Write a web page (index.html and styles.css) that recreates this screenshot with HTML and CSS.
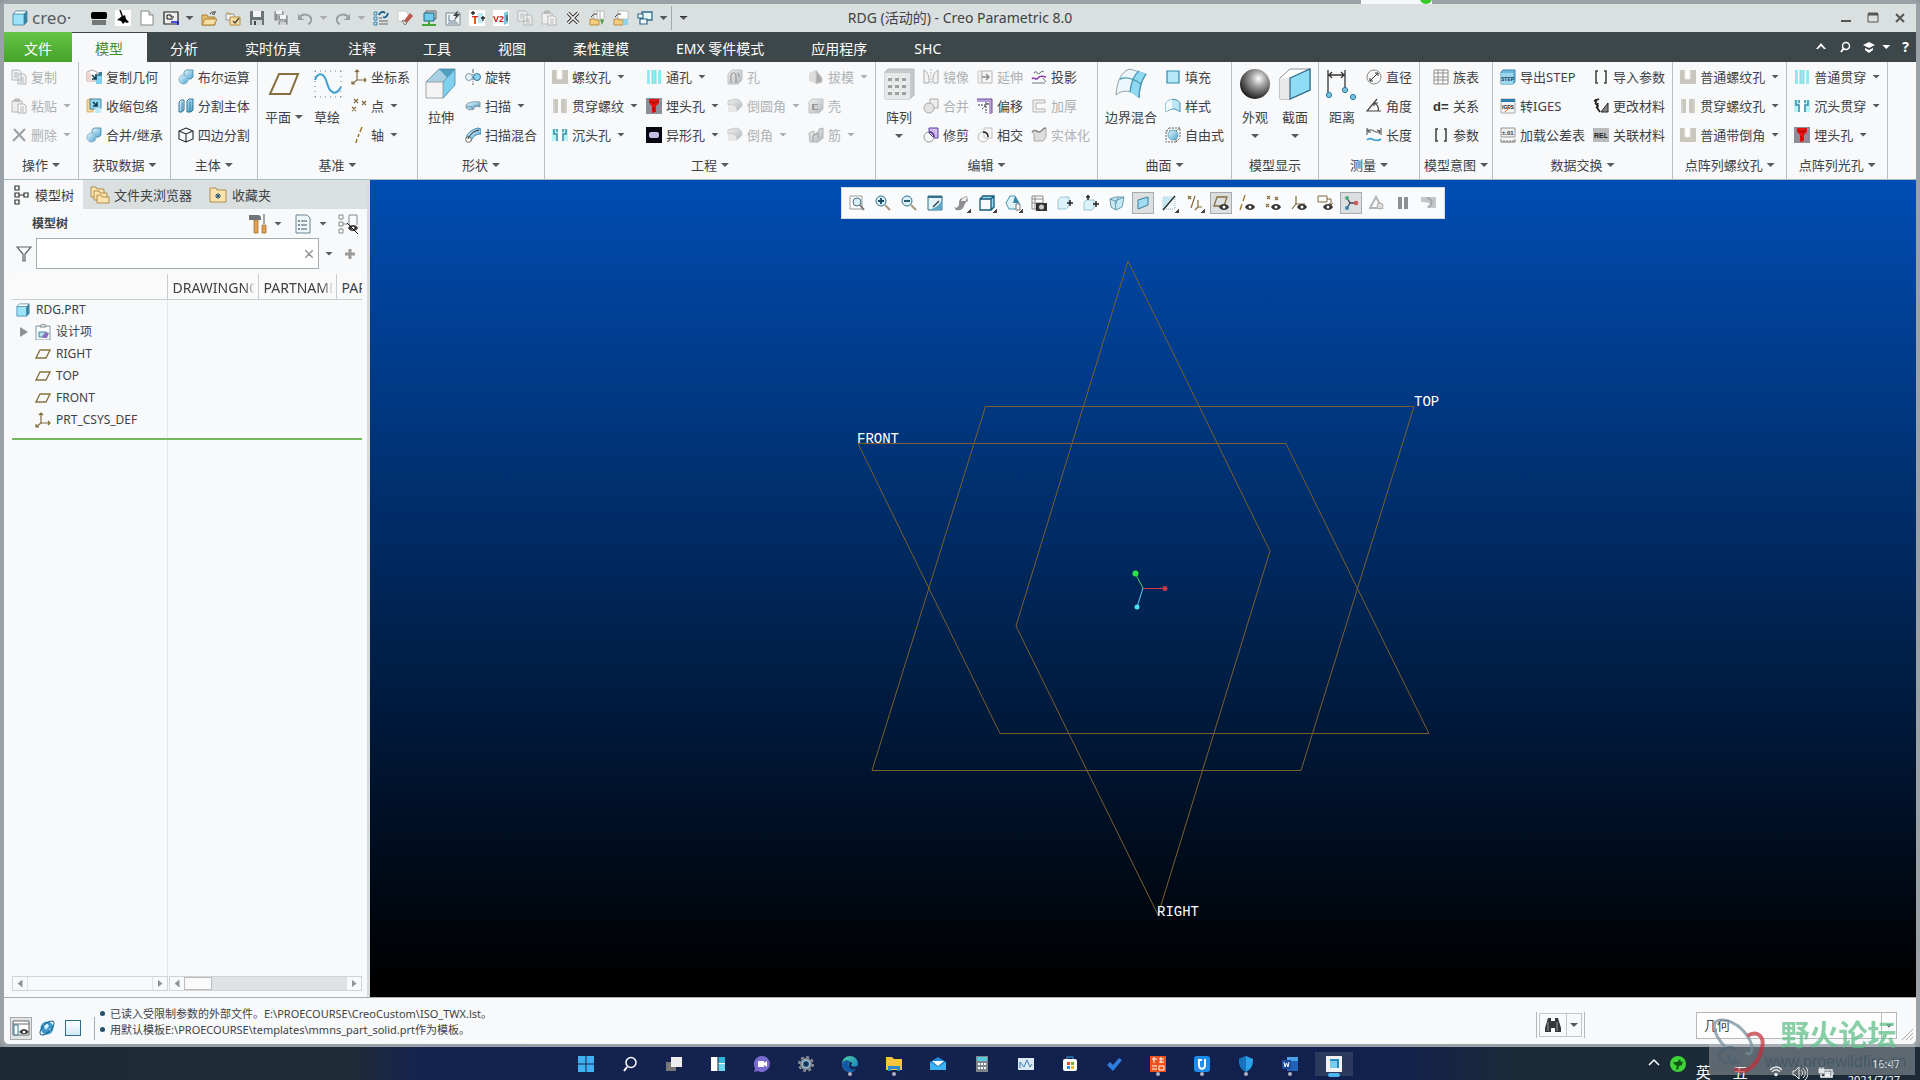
FILE: index.html
```html
<!DOCTYPE html>
<html lang="zh-CN">
<head>
<meta charset="UTF-8">
<meta name="viewport" content="width=device-width, initial-scale=1.0">
<title>RDG (活动的) - Creo Parametric 8.0</title>
<link rel="stylesheet" href="styles.css">
</head>
<body>

<!-- icon sprite -->
<svg class="sprite" aria-hidden="true">
    <defs>
        <linearGradient id="gBlue" x1="0" y1="0" x2="1" y2="1"><stop offset="0" stop-color="#e8f7fd"/><stop offset="1" stop-color="#4fa3cf"/></linearGradient>
        <linearGradient id="gGray" x1="0" y1="0" x2="1" y2="1"><stop offset="0" stop-color="#f2f2f2"/><stop offset="1" stop-color="#b4b8bb"/></linearGradient>
        <radialGradient id="gBall" cx=".62" cy=".32" r=".7"><stop offset="0" stop-color="#fff"/><stop offset=".35" stop-color="#a5a5a5"/><stop offset="1" stop-color="#1c1c1c"/></radialGradient>
        <linearGradient id="gEdge" x1="0" y1="0" x2="1" y2="1"><stop offset="0" stop-color="#4bd5a0"/><stop offset="1" stop-color="#1673cf"/></linearGradient>
    </defs>
    <symbol id="cube" viewBox="0 0 16 16"><path d="M1 4l3-3h11v11l-3 3H1z" fill="#fff"/><path d="M1 4h11v11H1z" fill="#9be3f8"/><path d="M12 4l3-3v11l-3 3z" fill="#3a88a8"/><path d="M1 4l3-3h11v11l-3 3H1zM1 4h11v11M12 4l3-3" fill="none" stroke="#38809c" stroke-width=".8"/></symbol>
    <symbol id="copy" viewBox="0 0 16 16"><path d="M1 1h7l2 2v8H1zM7 5h6l2 2v8H7z" fill="#f1f1f1" stroke="#b3b6b8"/><path d="M3 4h4M3 6h3M3 8h3M9 9h4M9 11h4M9 13h4" stroke="#b3b6b8"/></symbol>
    <symbol id="paste" viewBox="0 0 16 16"><path d="M1 3h10v11H1z" fill="#eee" stroke="#b8bbbd"/><path d="M3 3l1-2h4l1 2z" fill="#ccc" stroke="#aaa"/><path d="M7 6h6l2 2v7H7z" fill="#f8f8f8" stroke="#b0b3b5"/><path d="M9 9h4M9 11h4M9 13h4" stroke="#b3b6b8"/></symbol>
    <symbol id="del" viewBox="0 0 16 16"><path d="M3 2l11 12M14 2L2 14" stroke="#9c9fa1" stroke-width="2" fill="none"/></symbol>
    <symbol id="copygeo" viewBox="0 0 16 16"><path d="M1 3l5-2 5 2v9H1z" fill="#fff" stroke="#9a8a8a" stroke-width=".8"/><path d="M1 3l4 1v10L1 12z" fill="#efd6d0"/><path d="M10 7h6v8h-6z" fill="#7fd0ee"/><path d="M11 7l2-4h3v4z" fill="#3f7f9c"/><path d="M6 6l4 4M10 5v5H6" stroke="#123b54" stroke-width="1.600" fill="none"/></symbol>
    <symbol id="shrink" viewBox="0 0 16 16"><path d="M1 2l3-1h3v13H1z" fill="#f3d79a" stroke="#c79b50" stroke-width=".7"/><path d="M4 1h11v10H4z" fill="#8fd6ef" stroke="#36708c" stroke-width=".8"/><path d="M9 10h6v5H9z" fill="#bfeaf8"/><path d="M7 4l4 4M11 4v4H7" stroke="#123b54" stroke-width="1.600" fill="none"/></symbol>
    <symbol id="merge" viewBox="0 0 16 16"><path d="M6 3l2-2h7v7l-2 2H6z" fill="url(#gBlue)" stroke="#3a86aa" stroke-width=".8"/><circle cx="5.500" cy="10.500" r="4.600" fill="url(#gBlue)" stroke="#6fa9c4" stroke-width=".7"/></symbol>
    <symbol id="split" viewBox="0 0 16 16"><path d="M1 4l2-2h3v10l-2 2H1zM9 3l2-2h4v11l-2 2H9z" fill="url(#gBlue)" stroke="#2d7899"/><path d="M4 4v10M12 3v11" stroke="#2d7899" stroke-width=".8"/></symbol>
    <symbol id="quad" viewBox="0 0 16 16"><path d="M8 1l7 3v8l-7 3-7-3V4zM1 4l7 3 7-3M8 7v8" fill="none" stroke="#26292b" stroke-width="1.100"/></symbol>
    <symbol id="plane" viewBox="0 0 32 32"><path d="M11 6h19l-8 20H2z" fill="none" stroke="#86703f" stroke-width="2"/></symbol>
    <symbol id="sketch" viewBox="0 0 32 32"><path d="M4 12c3-8 9-8 12 3s9 13 14 4" fill="none" stroke="#3c9fd0" stroke-width="2"/><path d="M4 3h26M4 29h26M4 3v26M30 3v26" fill="none" stroke="#777" stroke-dasharray="1 4"/></symbol>
    <symbol id="csys" viewBox="0 0 16 16"><path d="M6 1v10l9 0M6 11l-5 4M4 3l2-2 2 2M13 9l2 2-2 2M1 12v3h3" fill="none" stroke="#806a3a" stroke-width="1.200"/></symbol>
    <symbol id="points" viewBox="0 0 16 16"><path d="M3 1l4 4M7 1L3 5M11 3l4 4M15 3l-4 4M1 9l4 4M5 9l-4 4" stroke="#806a3a" stroke-width="1.200"/></symbol>
    <symbol id="axis" viewBox="0 0 16 16"><path d="M11 0L9 5M8 7l-1 3M6 12l-1 4" stroke="#9a7628" stroke-width="1.500"/></symbol>
    <symbol id="extrude" viewBox="0 0 32 32"><path d="M1 14L14 1h16L18 14z" fill="#a9cfe2"/><path d="M14 1h16v17z" fill="#4d9fc0"/><path d="M30 1v16L18 31V14z" fill="#7fd0ec"/><path d="M1 14h17v16H1z" fill="#f4f4f4" stroke="#8a9297" stroke-width=".8"/><path d="M1 14L14 1h16v16L18 30M18 14L30 1" fill="none" stroke="#4c8aa4" stroke-width=".8"/></symbol>
    <symbol id="revolve" viewBox="0 0 16 16"><path d="M8 0v16" stroke="#333" stroke-dasharray="4 1 1 1" stroke-width=".8"/><circle cx="4" cy="8" r="3.500" fill="#e6f2f8" stroke="#7ba0b3"/><ellipse cx="12" cy="8" rx="3.500" ry="3.500" fill="#8ed3ee" stroke="#2d7899"/></symbol>
    <symbol id="sweep" viewBox="0 0 16 16"><path d="M1 8c0-3 6-5 14-4v5c-5-1-6 0-6 2l-4 1-4-2z" fill="url(#gBlue)" stroke="#6d8e9f" stroke-width=".8"/><path d="M1 8l6 1 1 3M8 9c1-2 4-2 7-1" fill="none" stroke="#6d8e9f" stroke-width=".8"/></symbol>
    <symbol id="blend" viewBox="0 0 16 16"><path d="M1 12C2 5 7 3 13 1l3 1v5C11 7 8 9 6 14z" fill="url(#gBlue)" stroke="#3a86aa"/><circle cx="3.500" cy="12.500" r="2.800" fill="#fff" stroke="#666"/><path d="M3 12C5 7 9 4 14 3" stroke="#222" fill="none"/></symbol>
    <symbol id="thread" viewBox="0 0 16 16"><path d="M0 1h5v9h5V1h6v14H0z" fill="#c9c7bd"/><path d="M5 1v9h5V1" fill="#fff" stroke="#e9e9e4"/></symbol>
    <symbol id="through" viewBox="0 0 16 16"><path d="M1 1h5v14H1zM9 1h6v14H9z" fill="#c9c7bd"/><path d="M2 1v14M14 1v14" stroke="#dddcd5"/></symbol>
    <symbol id="sink" viewBox="0 0 16 16"><path d="M0 2h16v12H0z" fill="#b8f3f6"/><path d="M6 2h4v12H6z" fill="#fff"/><path d="M2 2v5h3v7M14 2v5h-3v7M5 2v3M11 2v3" stroke="#3b8ea5" fill="none" stroke-width="1.500"/></symbol>
    <symbol id="hole" viewBox="0 0 16 16"><path d="M1 1h14v14H1z" fill="#8feaf2"/><path d="M4 1h2v14H4zM10 1h2v14h-2z" fill="#fff"/><path d="M6 1v14M10 1v14" stroke="#8ccdd6"/></symbol>
    <symbol id="csink" viewBox="0 0 16 16"><path d="M0 0h16v16H0z" fill="#8e8e9b"/><path d="M3 1h10v4l-3 3v6l-4 1V8L3 5z" fill="#e5130d"/><path d="M4 3c3 3 6 2 8 0M7 9l1 4" stroke="#8d0806" fill="none"/></symbol>
    <symbol id="odd" viewBox="0 0 16 16"><path d="M0 0h16v16H0z" fill="#060610"/><rect x="3" y="5" width="10" height="6" rx="2" fill="#c4bde6"/></symbol>
    <symbol id="ghole" viewBox="0 0 16 16"><path d="M1 5l4-4h10v10l-4 4H1z" fill="url(#gGray)" stroke="#c1c3c5"/><path d="M4 14V6c1-3 4-3 5 0v8M10 4c2 0 2 2 2 4" fill="none" stroke="#999" stroke-width="1.200"/></symbol>
    <symbol id="ground" viewBox="0 0 16 16"><path d="M1 3l8-2c5 1 6 4 6 7l-5 5c0-5-3-7-9-6z" fill="url(#gGray)" stroke="#c4c6c8"/><path d="M1 8h7l2 6H1z" fill="#e8e8e8"/></symbol>
    <symbol id="gbox" viewBox="0 0 16 16"><path d="M1 4l3-3h11v10l-4 4H1z" fill="url(#gGray)" stroke="#c1c3c5"/><path d="M4 6h6v6H4z" fill="#999"/><path d="M6 7h4v4H6z" fill="#ccc"/></symbol>
    <symbol id="draft" viewBox="0 0 16 16"><path d="M1 4l7-3v14l-7-3z" fill="#ddd"/><path d="M8 1l6 8v4l-6 2z" fill="#aaa" stroke="#ccc"/></symbol>
    <symbol id="rib" viewBox="0 0 16 16"><path d="M1 6l5-2v4l5-4V2l4-1v10l-5 4H2z" fill="url(#gGray)" stroke="#b0b2b4"/><path d="M5 14V9l5-3v5" fill="none" stroke="#999"/></symbol>
    <symbol id="pattern" viewBox="0 0 32 32"><path d="M2 4l3-3h26v26l-4 4H2z" fill="#c6c8c9" stroke="#b5b7b9"/><path d="M2 5h25v26H2z" fill="#e6e7e8"/><path d="M5 10h4v3H5zM12 10h4v3h-4zM19 10h4v3h-4zM5 17h4v3H5zM12 17h4v3h-4zM19 17h4v3h-4zM5 24h4v3H5zM12 24h4v3h-4zM19 24h4v3h-4z" fill="#9c9ea0"/><path d="M5 9h3M12 9h3M19 9h3M5 16h3M12 16h3M19 16h3M5 23h3M12 23h3M19 23h3" stroke="#fff"/></symbol>
    <symbol id="mirror" viewBox="0 0 16 16"><path d="M1 1c5 3 5 7 5 13H1zM15 1c-5 3-5 7-5 13h5z" fill="#f4f4f4" stroke="#a8abad"/><path d="M8 0v16" stroke="#bbb" stroke-dasharray="2 1"/></symbol>
    <symbol id="gmerge" viewBox="0 0 16 16"><path d="M7 1h8v9H7z" fill="#eee" stroke="#aaa"/><circle cx="6" cy="10" r="5" fill="#e4e4e4" stroke="#aaa"/></symbol>
    <symbol id="trim" viewBox="0 0 16 16"><path d="M6 1h9v10h-4L6 6z" fill="#d0bdf0" stroke="#5c3f9c"/><circle cx="6" cy="10" r="5" fill="none" stroke="#999"/><path d="M6 5c3 0 5 2 5 5" fill="none" stroke="#5c2f8c" stroke-width="1.500"/></symbol>
    <symbol id="extend" viewBox="0 0 16 16"><path d="M1 2h4v12H1z" fill="#eee" stroke="#ccc"/><path d="M5 2h10v12H5z" fill="#f5f5f5" stroke="#b5b5b5"/><path d="M5 8h7M9 5l3 3-3 3" fill="none" stroke="#8c8c8c" stroke-width="1.500"/></symbol>
    <symbol id="offset" viewBox="0 0 16 16"><path d="M0 1h15v15h-3V4H0z" fill="#b89ed6"/><path d="M15 1v14M0 1h15" stroke="#6c4c92"/><path d="M1 7h8v8M5 11l6-6M8 5h3v3" fill="none" stroke="#333" stroke-dasharray="2 1"/></symbol>
    <symbol id="intersect" viewBox="0 0 16 16"><path d="M7 1h8v10H7z" fill="#f7f7f7" stroke="#c5c5c5"/><circle cx="6" cy="10" r="5" fill="none" stroke="#bbb"/><path d="M6 5c3 0 5 2 5 5" fill="none" stroke="#222" stroke-width="1.500"/></symbol>
    <symbol id="project" viewBox="0 0 16 16"><path d="M3 4c2-4 4 3 6 0s4-1 4-1" fill="none" stroke="#555"/><path d="M1 10c2-3 4 2 6-1s5-2 8-1" fill="none" stroke="#8a3ea8" stroke-width="1.500"/><path d="M1 14h13M12 9l3 4" stroke="#777"/></symbol>
    <symbol id="thicken" viewBox="0 0 16 16"><path d="M14 2H2v12h12v-3H5V5h9z" fill="#efefef" stroke="#b3b3b3"/></symbol>
    <symbol id="solidify" viewBox="0 0 16 16"><path d="M1 5c3-4 4 0 7 0s3-4 7-4v9l-3 4H3V7z" fill="#ddd" stroke="#aaa"/><path d="M1 5c3-4 4 0 7 0s3-4 7-4" fill="none" stroke="#888" stroke-width="1.500"/></symbol>
    <symbol id="boundary" viewBox="0 0 32 32"><path d="M1 27C2 12 7 3 15 1l16 5C26 13 24 22 24 30 17 22 8 21 1 27z" fill="#eaf8fd" stroke="#96a2a8"/><path d="M15 24c1-9 4-17 9-21l7 3C26 13 24 22 24 30z" fill="#8fd9f1"/><path d="M5 11c7-3 14 0 21 5M15 24c1-9 4-17 9-21M31 6c-5 7-7 16-7 24" fill="none" stroke="#4b98b8" stroke-width="1.400"/></symbol>
    <symbol id="fill" viewBox="0 0 16 16"><path d="M2 2h12v12H2z" fill="#b6e8f8" stroke="#2f89ae" stroke-width="1.200"/></symbol>
    <symbol id="style" viewBox="0 0 16 16"><path d="M1 14V5c3-5 11-5 14 0v9c-4-4-9-4-14 0z" fill="#b9e7f6" stroke="#4294b5"/><path d="M1 14V5c2-3 4-3 6-4v10c-2 0-4 1-6 3z" fill="#effaff"/></symbol>
    <symbol id="freeform" viewBox="0 0 16 16"><path d="M1 4h10v11H1zM4 1h11v10M1 4l3-3M11 4l4-3M11 15l4-4" fill="none" stroke="#666" stroke-dasharray="2 1"/><circle cx="8" cy="8" r="5" fill="url(#gBlue)" stroke="#4294b5" stroke-width=".7"/></symbol>
    <symbol id="ball" viewBox="0 0 32 32"><circle cx="16" cy="16" r="15" fill="url(#gBall)"/></symbol>
    <symbol id="section" viewBox="0 0 32 32"><path d="M1 10L11 1h20v21L11 31H1z" fill="#fff" stroke="#8a9297"/><path d="M1 10h10v21H1z" fill="#e9e9e9"/><path d="M11 10l20-9v21L11 31z" fill="#8edcf5" stroke="#2c6a86" stroke-width="1.200"/></symbol>
    <symbol id="distance" viewBox="0 0 32 32"><path d="M2 2v24M19 2v19M3 7h15M6 4L3 7l3 3M15 4l3 3-3 3" fill="none" stroke="#333" stroke-width="1.300"/><g fill="#76c3e4" stroke="#2d7899"><circle cx="3" cy="27" r="2.600"/><circle cx="19" cy="22" r="2.600"/><circle cx="27" cy="29" r="2.600"/></g></symbol>
    <symbol id="diameter" viewBox="0 0 16 16"><circle cx="8" cy="8" r="7" fill="none" stroke="#888"/><path d="M4 12l8-8M4 9v3h3M9 4h3v3" fill="none" stroke="#333"/></symbol>
    <symbol id="angle" viewBox="0 0 16 16"><path d="M11 1L1 13h14M8 5c4 2 5 5 4 8M8 8V5h4" fill="none" stroke="#444" stroke-width="1.200"/></symbol>
    <symbol id="length" viewBox="0 0 16 16"><path d="M1 1v7M15 1v7M2 4c5-4 7 4 12 0M2 2v3h3M11 3l3 1-1 3" fill="none" stroke="#444"/><path d="M1 13c4-5 8 4 14-1" fill="none" stroke="#3ba1cc" stroke-width="1.700"/></symbol>
    <symbol id="grid" viewBox="0 0 16 16"><path d="M1 1h14v14H1zM1 4h14M1 8h14M1 11h14M5 1v14M10 1v14" fill="#fff" stroke="#8b8b8b"/></symbol>
    <symbol id="paren" viewBox="0 0 16 16"><path d="M5 2H3v12h2M11 2h2v12h-2" fill="none" stroke="#3c3c3c" stroke-width="1.500"/></symbol>
    <symbol id="material" viewBox="0 0 16 16"><path d="M1 3l5-2M2 5l3 3-2 2M5 5c-2 5 0 6 2 9M3 1v4" fill="none" stroke="#1b1b1b" stroke-width="1.700"/><path d="M15 5v9H8z" fill="#888" stroke="#222"/></symbol>

    <!-- quick access toolbar -->
    <symbol id="q-comb" viewBox="0 0 16 16"><rect y="2" width="16" height="7" rx="2"/><path d="M2 10v5M4 10v5M6 10v5M8 10v5M10 10v5M12 10v5M14 10v5" stroke="#111"/></symbol>
    <symbol id="q-broom" viewBox="0 0 16 16"><path d="M0 0h16v16H0z" fill="#fff"/><path d="M5 0l3 8" stroke="#111" stroke-width="1.500"/><path d="M6 7l4-2 1 4 3 3-2 1-2-1-2 2-2-3-4-1z"/></symbol>
    <symbol id="q-new" viewBox="0 0 16 16"><path d="M2 1h8l4 4v10H2z" fill="#fff" stroke="#888"/><path d="M10 1v4h4" fill="#ddd" stroke="#888"/></symbol>
    <symbol id="q-dir" viewBox="0 0 16 16"><path d="M1 2h14v12H1z" fill="#eee" stroke="#222" stroke-width="1.200"/><path d="M4 5v4h6M4 5h4v2h3" fill="none" stroke="#111"/><path d="M8 12h7v3" fill="none" stroke="#1b1bd0" stroke-width="1.500"/></symbol>
    <symbol id="q-open" viewBox="0 0 16 16"><path d="M1 5h5l1 2h7v8H1z" fill="#e6bd6b" stroke="#a98234"/><path d="M1 15l3-6h12l-3 6z" fill="#f8dfa3" stroke="#a98234"/><path d="M9 4c2-3 4-2 5-1V1M14 4h-3" fill="none" stroke="#333"/></symbol>
    <symbol id="q-openchk" viewBox="0 0 16 16"><path d="M1 4h8v6H1z" fill="#f0f0f0" stroke="#999"/><path d="M1 3h4v2" fill="none" stroke="#c79b50"/><path d="M5 7h10v8H5z" fill="#f9dc9b" stroke="#b98f45"/><path d="M8 11l2 2 4-5" fill="none" stroke="#444" stroke-width="1.300"/></symbol>
    <symbol id="q-save" viewBox="0 0 16 16"><path d="M1 1h14v14H1z" fill="#6d7478"/><path d="M4 1h8v6H4z" fill="#f5f5f5"/><path d="M3 10h10v5H3z" fill="#cfd3d5"/><path d="M5 11h2v4H5z" fill="#444"/></symbol>
    <symbol id="q-saveas" viewBox="0 0 16 16"><path d="M1 1h10v10H1zM5 5h10v10H5z" fill="#8a9094" stroke="#eee" stroke-width=".6"/><path d="M7 5h6v4H7zM3 1h6v3H3z" fill="#f5f5f5"/><path d="M7 12h6v3H7z" fill="#d0d0d0"/></symbol>
    <symbol id="q-undo" viewBox="0 0 16 16"><path d="M2 8c3-5 10-4 12 0 1 3-1 6-3 6" fill="none" stroke="#9a9f9f" stroke-width="2"/><path d="M1 4v6h6z" fill="#9a9f9f"/></symbol>
    <symbol id="q-redo" viewBox="0 0 16 16"><path d="M14 8C11 3 4 4 2 8c-1 3 1 6 3 6" fill="none" stroke="#9a9f9f" stroke-width="2"/><path d="M15 4v6H9z" fill="#9a9f9f"/></symbol>
    <symbol id="q-regen" viewBox="0 0 16 16"><path d="M1 2h3v3H1zM1 7h3v3H1zM1 12h3v3H1z" fill="#bfe6f5" stroke="#3a86aa"/><path d="M6 11h9M6 14h9M6 8h3" stroke="#666"/><path d="M6 5c1-3 4-4 6-2M15 3c-1 4-3 5-5 4" fill="none" stroke="#145a86" stroke-width="1.800"/></symbol>
    <symbol id="q-erase" viewBox="0 0 16 16"><path d="M1 1h8l2 3v7H1z" fill="#fff" stroke="#ccc"/><path d="M6 12l7-9 3 3-7 8z" fill="#b8584a"/><path d="M5 11l3 4 2-2-4-3z" fill="#f2e3dd" stroke="#777"/></symbol>
    <symbol id="q-pc" viewBox="0 0 16 16"><path d="M5 1h10v8H5z" fill="#cfd3d5" stroke="#666"/><path d="M3 3h10v8H3z" fill="#6ecbee" stroke="#245e7a"/><path d="M8 11v3M1 15h14" stroke="#44a538" stroke-width="2"/></symbol>
    <symbol id="q-flash" viewBox="0 0 16 16"><path d="M1 3h14v12H1z" fill="#f1f3f4" stroke="#7b8a92"/><path d="M4 5v6h7M3 13h10" fill="none" stroke="#5f7f90"/><path d="M13 0L8 6h3l-2 5 6-7h-3z" fill="#444"/></symbol>
    <symbol id="q-close" viewBox="0 0 16 16"><path d="M3 3l10 10M13 3L3 13" stroke="#333" stroke-width="3.500"/><path d="M3 3l10 10M13 3L3 13" stroke="#fff" stroke-width="1.500"/></symbol>
    <symbol id="q-fold" viewBox="0 0 16 16"><path d="M5 1h10v8H5z" fill="#fff" stroke="#bbb"/><path d="M8 1v7M11 1v7" stroke="#aaa"/><path d="M1 9h4l1 1h4v5H1z" fill="#f4ce7d" stroke="#b98f45"/><path d="M2 7l3-3h3" fill="none" stroke="#444"/><path d="M11 9l4 1-2 5z" fill="#4b9e3d"/></symbol>
    <symbol id="q-fold2" viewBox="0 0 16 16"><path d="M5 1h10v8H5z" fill="#fff" stroke="#bbb"/><path d="M1 9h4l1 1h4v5H1z" fill="#f4ce7d" stroke="#b98f45"/><path d="M2 7l3-3h3" fill="none" stroke="#444"/><path d="M10 9h5v6h-5z" fill="#8fd0ea"/></symbol>
    <symbol id="q-win" viewBox="0 0 16 16"><path d="M5 2h10v8H5z" fill="#e8f6fb" stroke="#2d6d8c" stroke-width="1.300"/><path d="M1 4h5v4H1zM3 9h7v5H3z" fill="#f7f7f7" stroke="#2d6d8c" stroke-width="1.200"/></symbol>

    <!-- side panel -->
    <symbol id="tree" viewBox="0 0 16 20"><path d="M2 1h4v4H2zM2 8h4v4H2zM2 15h4v4H2zM11 8h4v4h-4zM6 10h5" fill="none" stroke="#333" stroke-width="1.200"/></symbol>
    <symbol id="folders" viewBox="0 0 20 18"><g fill="#fbe3ae" stroke="#b08d4c"><path d="M1 1h5l1 2h7v8H1z"/><path d="M4 5h5l1 2h7v7H4z"/><path d="M7 9h4l1 2h7v6H7z"/></g></symbol>
    <symbol id="fav" viewBox="0 0 20 18"><path d="M2 2h6l1 2h9v12H2z" fill="#fbe3ae" stroke="#b08d4c"/><path d="M10 7v6M7 10h6M8 8l4 4M12 8l-4 4" stroke="#17526e"/></symbol>
    <symbol id="tools" viewBox="0 0 18 20"><path d="M5 6h4v13H5z" fill="#e2a251" stroke="#96652a" stroke-width=".7"/><path d="M0 1h10l2 2v3H0z" fill="#6f767b"/><path d="M15 0v10" stroke="#888" stroke-width="1.500"/><path d="M13 11h4v8h-4z" fill="#e2a251" stroke="#96652a" stroke-width=".7"/></symbol>
    <symbol id="list" viewBox="0 0 16 20"><path d="M1 1h11l3 3v15H1z" fill="#eef6fa" stroke="#6d8490"/><path d="M6 7h6M6 11h6M6 15h6" stroke="#456"/><path d="M3 6h2v2H3zM3 10h2v2H3zM3 14h2v2H3z" fill="#7a8f9a"/></symbol>
    <symbol id="treeeye" viewBox="0 0 20 20"><path d="M1 1h4v4H1zM1 8h4v4H1zM1 15h4v4H1zM5 10h4M11 1v10M11 1h8v10" fill="none" stroke="#888"/><path d="M10 14c2-4 8-4 10 0-2 4-8 4-10 0z" fill="#333"/><circle cx="15" cy="14" r="1.500" fill="#fff"/><path d="M9 9l11 11" stroke="#111"/></symbol>
    <symbol id="funnel" viewBox="0 0 16 16"><path d="M1 1h14L9 8v7H7V8z" fill="#fff" stroke="#5d6365" stroke-width="1.200"/></symbol>
    <symbol id="design" viewBox="0 0 16 16"><path d="M1 2h14v14H1z" fill="#fbfbfb" stroke="#7f9aa8"/><path d="M5 3c0-4 6-4 6 0z" fill="#ddd" stroke="#7f8a90"/><path d="M4 8h7v5H4z" fill="#b7e2f2" stroke="#4a7f98"/><path d="M7 12l4-4 3 1-2 5H8z" fill="#8d6cc0"/></symbol>
    <symbol id="splane" viewBox="0 0 16 16"><path d="M5 4h10l-4 8H1z" fill="none" stroke="#86703f" stroke-width="1.300"/></symbol>

    <!-- view toolbar -->
    <symbol id="eye" viewBox="0 0 16 16"><path d="M6 12c2-4 8-4 10 0-2 4-8 4-10 0z" fill="#333"/><circle cx="11" cy="12" r="1.500" fill="#fff"/></symbol>
    <symbol id="v-fit" viewBox="0 0 16 16"><path d="M1 1h12v13H1z" fill="#fff" stroke="#999"/><circle cx="8" cy="7" r="4" fill="#d8f1fa" stroke="#4a6c7c"/><path d="M11 10l4 5" stroke="#777" stroke-width="2"/></symbol>
    <symbol id="v-in" viewBox="0 0 16 16"><circle cx="6" cy="6" r="5" fill="#d8f1fa" stroke="#2f6f8c"/><path d="M6 3v6M3 6h6" stroke="#174a63" stroke-width="1.800"/><path d="M10 10l5 5" stroke="#a8977a" stroke-width="2"/></symbol>
    <symbol id="v-out" viewBox="0 0 16 16"><circle cx="6" cy="6" r="5" fill="#d8f1fa" stroke="#2f6f8c"/><path d="M3 6h6" stroke="#174a63" stroke-width="1.800"/><path d="M10 10l5 5" stroke="#a8977a" stroke-width="2"/></symbol>
    <symbol id="v-repaint" viewBox="0 0 16 16"><path d="M1 1h14v14H1z" fill="#e3f5fb" stroke="#356f88"/><path d="M1 1h14v2H1z" fill="#356f88"/><path d="M15 4c-2 6-6 9-14 11h14z" fill="#5fa9c6"/><path d="M12 6L6 12" stroke="#234" stroke-width="1.300"/></symbol>
    <symbol id="v-render" viewBox="0 0 16 16"><path d="M1 12c2 2 5 0 5-3 0-2 0-5 3-6l5-2 1 5c-2 1-3 2-4 5-1 4-5 5-8 4z" fill="#8c8e90"/><path d="M8 6c1-3 4-4 6-4l-1 4z" fill="#eee"/></symbol>
    <symbol id="v-style" viewBox="0 0 16 16"><path d="M1 4l3-3h11v11l-3 3H1z" fill="#9bd9ee"/><path d="M1 4h11v11H1z" fill="#f6fbfd"/><path d="M1 4l3-3h11v11l-3 3H1zM1 4h11v11M12 4l3-3" fill="none" stroke="#155a78" stroke-width="1.300"/></symbol>
    <symbol id="v-orient" viewBox="0 0 16 16"><path d="M1 8l4-7h5l4 7v6H4z" fill="#dff3fa" stroke="#4294b5"/><path d="M10 1l4 7H8z" fill="#2f86a8"/><path d="M11 9h4v6h-4z" fill="#fff" stroke="#777"/></symbol>
    <symbol id="v-camera" viewBox="0 0 16 16"><path d="M1 1h11v13H1zM1 4h11M1 8h11M4 1v13" fill="#fff" stroke="#888"/><path d="M5 8h11v8H5z" fill="#333"/><circle cx="10.500" cy="12" r="2.500" fill="#ccc"/></symbol>
    <symbol id="v-box" viewBox="0 0 16 16"><path d="M1 5l3-3h8v9l-3 3H1z" fill="#d9f2fb" stroke="#9bc7d8"/><path d="M13 5v6M10 8h6" stroke="#222" stroke-width="1.500"/></symbol>
    <symbol id="v-box2" viewBox="0 0 16 16"><path d="M1 7l2-2h8v8l-2 2H1z" fill="#d9f2fb" stroke="#9bc7d8"/><path d="M5 0v5M3 2h4M13 6v6M10 9h6" stroke="#222" stroke-width="1.500"/></symbol>
    <symbol id="v-persp" viewBox="0 0 16 16"><path d="M1 4l6-2 8 0-2 10-6 3-5-3z" fill="#c8e8f4" stroke="#669cb3"/><path d="M1 4l5 2 9-4M6 6l1 9M9 2l-2 7" fill="none" stroke="#669cb3"/></symbol>
    <symbol id="v-sec" viewBox="0 0 16 16"><path d="M3 5l10-3v8L3 14z" fill="#9fdcf2" stroke="#3a7f9b"/></symbol>
    <symbol id="v-clip" viewBox="0 0 16 16"><path d="M2 2h12v12H2z" fill="#f1f9fc" stroke="#9bb" stroke-dasharray="1 1"/><path d="M2 2h11L2 14z" fill="#c5e8f4"/><path d="M14 1L2 15" stroke="#222" stroke-width="1.200"/></symbol>
    <symbol id="v-datum" viewBox="0 0 16 16"><path d="M1 1l3 3M4 1L1 4M8 1L4 13M11 5v7h4M11 12l-3 3" fill="none" stroke="#806a3a" stroke-width="1.200"/></symbol>
    <symbol id="v-plane" viewBox="0 0 16 16"><path d="M4 2h10l-3 9H1z" fill="none" stroke="#86703f" stroke-width="1.300"/><use href="#eye"/></symbol>
    <symbol id="v-axis" viewBox="0 0 16 16"><path d="M6 0L4 6M3 9l-2 6" stroke="#9a7628" stroke-width="1.300"/><use href="#eye"/></symbol>
    <symbol id="v-point" viewBox="0 0 16 16"><path d="M2 1l3 3M5 1L2 4M10 2l3 3M13 2l-3 3M1 9l3 3M4 9l-3 3" stroke="#806a3a" stroke-width="1.200"/><use href="#eye"/></symbol>
    <symbol id="v-csys" viewBox="0 0 16 16"><path d="M5 1v8h9M5 9l-4 5" fill="none" stroke="#806a3a" stroke-width="1.200"/><use href="#eye"/></symbol>
    <symbol id="v-note" viewBox="0 0 16 16"><path d="M1 1h9v6H1zM10 4h4v6M12 8l2 2 2-2" fill="none" stroke="#806a3a"/><use href="#eye"/></symbol>
    <symbol id="v-spin" viewBox="0 0 16 16"><path d="M4 3l3 5-3 5M7 8h6" fill="none" stroke="#445" stroke-width="1.300"/><circle cx="4" cy="3" r="2" fill="#4caf7a"/><circle cx="4" cy="13" r="2" fill="#3b86b0"/><circle cx="13" cy="8" r="2.300" fill="#d05858"/></symbol>
    <symbol id="v-tri" viewBox="0 0 16 16"><path d="M7 2l6 11H1z" fill="none" stroke="#b2b4b6" stroke-width="2"/><circle cx="11" cy="11" r="3" fill="#ddd" stroke="#aaa"/></symbol>
    <symbol id="v-pause" viewBox="0 0 16 16"><path d="M3 2h4v12H3zM9 2h4v12H9z" fill="#8d8f91"/></symbol>
    <symbol id="v-last" viewBox="0 0 16 16"><path d="M0 2h15v11H3c4 0 6-1 6-3s-3-3-9-3z" fill="#c4c6c8"/><path d="M6 3c6 1 6 7 1 9" fill="none" stroke="#a5a7a9" stroke-width="2"/></symbol>
    <symbol id="binoc" viewBox="0 0 16 16"><path d="M3 1h3v3h4V1h3l3 10v4h-6v-4H6v4H0v-4z" fill="#343638"/><path d="M3 5v9M12 5v9" stroke="#999"/></symbol>
    <symbol id="globe" viewBox="0 0 18 16"><circle cx="9" cy="8" r="6.500" fill="#3c96cc"/><path d="M5 5l4-2 2 3-3 4zM11 9l3-1-2 4z" fill="#d4effa"/><ellipse cx="9" cy="8" rx="9" ry="4" fill="none" stroke="#16618c" transform="rotate(-45 9 8)"/></symbol>
    <symbol id="layout" viewBox="0 0 18 16"><path d="M1 1h16v14H1z" fill="#fff" stroke="#666"/><path d="M1 4h16" stroke="#666"/><path d="M2 5h4v10H2z" fill="#fff" stroke="#2d7899"/><path d="M7 12c3-4 7-4 10 0-3 3-7 3-10 0z" fill="#444"/><circle cx="12" cy="12" r="1.300" fill="#fff"/></symbol>
</svg>

<div class="window">
    <header class="titlebar">
        <div class="brand"><svg class="i16"><use href="#cube"/></svg><span>creo·</span></div>
        <div class="quick">
            <button title="comb"><svg class="i16"><use href="#q-comb"/></svg></button>
            <button title="clean"><svg class="i16"><use href="#q-broom"/></svg></button>
            <button title="new"><svg class="i16"><use href="#q-new"/></svg></button>
            <button class="with-caret" title="directory"><svg class="i16"><use href="#q-dir"/></svg><i class="caret"></i></button>
            <button title="open"><svg class="i16"><use href="#q-open"/></svg></button>
            <button title="open last"><svg class="i16"><use href="#q-openchk"/></svg></button>
            <button title="save"><svg class="i16"><use href="#q-save"/></svg></button>
            <button title="save as"><svg class="i16"><use href="#q-saveas"/></svg></button>
            <button class="with-caret" title="undo" disabled><svg class="i16"><use href="#q-undo"/></svg><i class="caret"></i></button>
            <button class="with-caret" title="redo" disabled><svg class="i16"><use href="#q-redo"/></svg><i class="caret"></i></button>
            <button title="regenerate"><svg class="i16"><use href="#q-regen"/></svg></button>
            <button title="erase"><svg class="i16"><use href="#q-erase"/></svg></button>
            <button title="session"><svg class="i16"><use href="#q-pc"/></svg></button>
            <button title="mapkey"><svg class="i16"><use href="#q-flash"/></svg></button>
            <button title="T"><svg class="i16 lettered" viewBox="0 0 16 16"><path d="M0 0h16v16H0z" fill="#fff"/><path d="M9 3h5v10H9z" fill="#bde7f5"/><text x="3" y="14" font-size="10" fill="#c8211b">T</text><path d="M4 1v4M2 3h4M14 6v5M12 8h4" stroke="#222" stroke-width="1.300"/></svg></button>
            <button title="V2"><svg class="i16 lettered" viewBox="0 0 16 16"><path d="M0 0h16v16H0z" fill="#fff"/><path d="M11 3l4-2v12l-4 2z" fill="#7fc6df"/><text x="0" y="12" font-size="9" fill="#c8211b">V2</text><path d="M14 5v6" stroke="#222"/></svg></button>
            <button title="copy" disabled><svg class="i16"><use href="#copy"/></svg></button>
            <button title="paste" disabled><svg class="i16"><use href="#paste"/></svg></button>
            <button title="close"><svg class="i16"><use href="#q-close"/></svg></button>
            <button title="folder in"><svg class="i16"><use href="#q-fold"/></svg></button>
            <button title="folder out"><svg class="i16"><use href="#q-fold2"/></svg></button>
            <button class="with-caret" title="windows"><svg class="i16"><use href="#q-win"/></svg><i class="caret"></i></button>
            <button class="customize" title="customize"><i class="caret"></i></button>
        </div>
        <h1>RDG (活动的) - Creo Parametric 8.0</h1>
        <div class="winbtns">
            <button title="minimize"><svg class="i12" viewBox="0 0 12 12"><path d="M1 9h10" stroke="#555" stroke-width="2"/></svg></button>
            <button title="maximize"><svg class="i12" viewBox="0 0 12 12"><path d="M1 2h10v8H1z" fill="none" stroke="#555"/><path d="M1 2h10" stroke="#555" stroke-width="3"/></svg></button>
            <button title="close window"><svg class="i12" viewBox="0 0 12 12"><path d="M2 2l8 8M10 2l-8 8" stroke="#555" stroke-width="2"/></svg></button>
        </div>
    </header>

    <nav class="tabs">
        <button class="tab file">文件</button>
        <button class="tab active">模型</button>
        <button class="tab">分析</button>
        <button class="tab">实时仿真</button>
        <button class="tab">注释</button>
        <button class="tab">工具</button>
        <button class="tab">视图</button>
        <button class="tab">柔性建模</button>
        <button class="tab">EMX 零件模式</button>
        <button class="tab">应用程序</button>
        <button class="tab">SHC</button>
        <div class="tabtools">
            <button title="collapse"><svg class="i12" viewBox="0 0 12 12"><path d="M1 8l5-6 5 6-2 0-3-3-3 3z" fill="#fff"/></svg></button>
            <button title="search"><svg class="i12" viewBox="0 0 12 12"><circle cx="7" cy="5" r="3.500" fill="none" stroke="#fff" stroke-width="1.500"/><path d="M5 7l-3 4" stroke="#fff" stroke-width="2"/></svg></button>
            <button title="learn"><svg class="i12" viewBox="0 0 12 12"><path d="M0 4l6-3 6 3-6 3zM2 7l4 2 4-2v2l-4 3-4-3z" fill="#fff"/></svg><i class="caret"></i></button>
            <button class="help" title="help">?</button>
        </div>
    </nav>

    <section class="ribbon">
        <div class="group">
            <div class="tools">
                <div class="col">
                    <button class="cmd" disabled><svg class="i16"><use href="#copy"/></svg>复制</button>
                    <button class="cmd" disabled><svg class="i16"><use href="#paste"/></svg>粘贴<i class="caret"></i></button>
                    <button class="cmd" disabled><svg class="i16"><use href="#del"/></svg>删除<i class="caret"></i></button>
                </div>
            </div>
            <button class="label">操作<i class="caret"></i></button>
        </div>
        <div class="group">
            <div class="tools">
                <div class="col">
                    <button class="cmd"><svg class="i16"><use href="#copygeo"/></svg>复制几何</button>
                    <button class="cmd"><svg class="i16"><use href="#shrink"/></svg>收缩包络</button>
                    <button class="cmd"><svg class="i16"><use href="#merge"/></svg>合并/继承</button>
                </div>
            </div>
            <button class="label">获取数据<i class="caret"></i></button>
        </div>
        <div class="group">
            <div class="tools">
                <div class="col">
                    <button class="cmd"><svg class="i16"><use href="#merge"/></svg>布尔运算</button>
                    <button class="cmd"><svg class="i16"><use href="#split"/></svg>分割主体</button>
                    <button class="cmd"><svg class="i16"><use href="#quad"/></svg>四边分割</button>
                </div>
            </div>
            <button class="label">主体<i class="caret"></i></button>
        </div>
        <div class="group">
            <div class="tools">
                <button class="big"><svg class="i32"><use href="#plane"/></svg><span>平面<i class="caret"></i></span></button>
                <button class="big"><svg class="i32"><use href="#sketch"/></svg><span>草绘</span></button>
                <div class="col">
                    <button class="cmd"><svg class="i16"><use href="#csys"/></svg>坐标系</button>
                    <button class="cmd"><svg class="i16"><use href="#points"/></svg>点<i class="caret"></i></button>
                    <button class="cmd"><svg class="i16"><use href="#axis"/></svg>轴<i class="caret"></i></button>
                </div>
            </div>
            <button class="label">基准<i class="caret"></i></button>
        </div>
        <div class="group">
            <div class="tools">
                <button class="big"><svg class="i32"><use href="#extrude"/></svg><span>拉伸</span></button>
                <div class="col">
                    <button class="cmd"><svg class="i16"><use href="#revolve"/></svg>旋转</button>
                    <button class="cmd"><svg class="i16"><use href="#sweep"/></svg>扫描<i class="caret"></i></button>
                    <button class="cmd"><svg class="i16"><use href="#blend"/></svg>扫描混合</button>
                </div>
            </div>
            <button class="label">形状<i class="caret"></i></button>
        </div>
        <div class="group">
            <div class="tools">
                <div class="col">
                    <button class="cmd"><svg class="i16"><use href="#thread"/></svg>螺纹孔<i class="caret"></i></button>
                    <button class="cmd"><svg class="i16"><use href="#through"/></svg>贯穿螺纹<i class="caret"></i></button>
                    <button class="cmd"><svg class="i16"><use href="#sink"/></svg>沉头孔<i class="caret"></i></button>
                </div>
                <div class="col">
                    <button class="cmd"><svg class="i16"><use href="#hole"/></svg>通孔<i class="caret"></i></button>
                    <button class="cmd"><svg class="i16"><use href="#csink"/></svg>埋头孔<i class="caret"></i></button>
                    <button class="cmd"><svg class="i16"><use href="#odd"/></svg>异形孔<i class="caret"></i></button>
                </div>
                <div class="col">
                    <button class="cmd" disabled><svg class="i16"><use href="#ghole"/></svg>孔</button>
                    <button class="cmd" disabled><svg class="i16"><use href="#ground"/></svg>倒圆角<i class="caret"></i></button>
                    <button class="cmd" disabled><svg class="i16"><use href="#ground"/></svg>倒角<i class="caret"></i></button>
                </div>
                <div class="col">
                    <button class="cmd" disabled><svg class="i16"><use href="#draft"/></svg>拔模<i class="caret"></i></button>
                    <button class="cmd" disabled><svg class="i16"><use href="#gbox"/></svg>壳</button>
                    <button class="cmd" disabled><svg class="i16"><use href="#rib"/></svg>筋<i class="caret"></i></button>
                </div>
            </div>
            <button class="label">工程<i class="caret"></i></button>
        </div>
        <div class="group">
            <div class="tools">
                <button class="big"><svg class="i32"><use href="#pattern"/></svg><span>阵列</span><i class="caret"></i></button>
                <div class="col">
                    <button class="cmd" disabled><svg class="i16"><use href="#mirror"/></svg>镜像</button>
                    <button class="cmd" disabled><svg class="i16"><use href="#gmerge"/></svg>合并</button>
                    <button class="cmd"><svg class="i16"><use href="#trim"/></svg>修剪</button>
                </div>
                <div class="col">
                    <button class="cmd" disabled><svg class="i16"><use href="#extend"/></svg>延伸</button>
                    <button class="cmd"><svg class="i16"><use href="#offset"/></svg>偏移</button>
                    <button class="cmd"><svg class="i16"><use href="#intersect"/></svg>相交</button>
                </div>
                <div class="col">
                    <button class="cmd"><svg class="i16"><use href="#project"/></svg>投影</button>
                    <button class="cmd" disabled><svg class="i16"><use href="#thicken"/></svg>加厚</button>
                    <button class="cmd" disabled><svg class="i16"><use href="#solidify"/></svg>实体化</button>
                </div>
            </div>
            <button class="label">编辑<i class="caret"></i></button>
        </div>
        <div class="group">
            <div class="tools">
                <button class="big"><svg class="i32"><use href="#boundary"/></svg><span>边界混合</span></button>
                <div class="col">
                    <button class="cmd"><svg class="i16"><use href="#fill"/></svg>填充</button>
                    <button class="cmd"><svg class="i16"><use href="#style"/></svg>样式</button>
                    <button class="cmd"><svg class="i16"><use href="#freeform"/></svg>自由式</button>
                </div>
            </div>
            <button class="label">曲面<i class="caret"></i></button>
        </div>
        <div class="group">
            <div class="tools">
                <button class="big"><svg class="i32"><use href="#ball"/></svg><span>外观</span><i class="caret"></i></button>
                <button class="big"><svg class="i32"><use href="#section"/></svg><span>截面</span><i class="caret"></i></button>
            </div>
            <div class="label">模型显示</div>
        </div>
        <div class="group">
            <div class="tools">
                <button class="big"><svg class="i32"><use href="#distance"/></svg><span>距离</span></button>
                <div class="col">
                    <button class="cmd"><svg class="i16"><use href="#diameter"/></svg>直径</button>
                    <button class="cmd"><svg class="i16"><use href="#angle"/></svg>角度</button>
                    <button class="cmd"><svg class="i16"><use href="#length"/></svg>长度</button>
                </div>
            </div>
            <button class="label">测量<i class="caret"></i></button>
        </div>
        <div class="group">
            <div class="tools">
                <div class="col">
                    <button class="cmd"><svg class="i16"><use href="#grid"/></svg>族表</button>
                    <button class="cmd"><svg class="i16 lettered" viewBox="0 0 16 16"><text x="0" y="13" font-size="13" fill="#333">d=</text></svg>关系</button>
                    <button class="cmd"><svg class="i16"><use href="#paren"/></svg>参数</button>
                </div>
            </div>
            <button class="label">模型意图<i class="caret"></i></button>
        </div>
        <div class="group">
            <div class="tools">
                <div class="col">
                    <button class="cmd"><svg class="i16 lettered" viewBox="0 0 16 16"><path d="M1 3l2-2h12v12l-2 2H1z" fill="#69b9dd" stroke="#3a86aa"/><path d="M1 4h12v11H1z" fill="#9bd6ee"/><text x="1" y="12" font-size="5" fill="#143c58">STEP</text></svg>导出STEP</button>
                    <button class="cmd"><svg class="i16 lettered" viewBox="0 0 16 16"><path d="M1 1h14v14H1z" fill="#f3f3f3" stroke="#aaa"/><path d="M1 1h14v3H1z" fill="#2c7cb0"/><text x="2" y="11" font-size="5" fill="#222">IGES</text><path d="M5 14l7-7" stroke="#e0692b"/></svg>转IGES</button>
                    <button class="cmd"><svg class="i16 lettered" viewBox="0 0 16 16"><path d="M1 1h14v9H1z" fill="#eee" stroke="#999"/><text x="2" y="8" font-size="6" fill="#333">±.01</text><path d="M1 12v3h14v-3M4 15v-2M7 15v-2M10 15v-2M13 15v-2" fill="none" stroke="#777"/></svg>加载公差表</button>
                </div>
                <div class="col">
                    <button class="cmd"><svg class="i16"><use href="#paren"/></svg>导入参数</button>
                    <button class="cmd"><svg class="i16"><use href="#material"/></svg>更改材料</button>
                    <button class="cmd"><svg class="i16 lettered" viewBox="0 0 16 16"><path d="M0 1h16v14H0z" fill="#b9babb"/><text x="1" y="11" font-size="7" fill="#222">REL</text></svg>关联材料</button>
                </div>
            </div>
            <button class="label">数据交换<i class="caret"></i></button>
        </div>
        <div class="group">
            <div class="tools">
                <div class="col">
                    <button class="cmd"><svg class="i16"><use href="#thread"/></svg>普通螺纹孔<i class="caret"></i></button>
                    <button class="cmd"><svg class="i16"><use href="#through"/></svg>贯穿螺纹孔<i class="caret"></i></button>
                    <button class="cmd"><svg class="i16"><use href="#thread"/></svg>普通带倒角<i class="caret"></i></button>
                </div>
            </div>
            <button class="label">点阵列螺纹孔<i class="caret"></i></button>
        </div>
        <div class="group">
            <div class="tools">
                <div class="col">
                    <button class="cmd"><svg class="i16"><use href="#hole"/></svg>普通贯穿<i class="caret"></i></button>
                    <button class="cmd"><svg class="i16"><use href="#sink"/></svg>沉头贯穿<i class="caret"></i></button>
                    <button class="cmd"><svg class="i16"><use href="#csink"/></svg>埋头孔<i class="caret"></i></button>
                </div>
            </div>
            <button class="label">点阵列光孔<i class="caret"></i></button>
        </div>
    </section>

    <main class="work">
        <aside class="side">
            <div class="side-tabs">
                <button class="active"><svg class="i20"><use href="#tree"/></svg>模型树</button>
                <button><svg class="i20"><use href="#folders"/></svg>文件夹浏览器</button>
                <button><svg class="i20"><use href="#fav"/></svg>收藏夹</button>
            </div>
            <div class="side-head">
                <h2>模型树</h2>
                <button title="settings"><svg class="i20"><use href="#tools"/></svg><i class="caret"></i></button>
                <button title="show"><svg class="i20"><use href="#list"/></svg><i class="caret"></i></button>
                <button title="visibility"><svg class="i20"><use href="#treeeye"/></svg></button>
            </div>
            <div class="filter">
                <svg class="i16"><use href="#funnel"/></svg>
                <div class="search">
                    <input type="text" aria-label="过滤">
                    <button title="clear"><svg class="i8" viewBox="0 0 8 8"><path d="M0 0l8 8M8 0L0 8" stroke="#999" stroke-width="1.500"/></svg></button>
                </div>
                <button title="options"><i class="caret"></i></button>
                <button title="add"><svg class="i12" viewBox="0 0 12 12"><path d="M6 1v10M1 6h10" stroke="#999" stroke-width="3"/></svg></button>
            </div>
            <div class="tree">
                <table>
                    <thead>
                        <tr><th class="c-name"></th><th class="c-no"><span>DRAWINGNO</span></th><th class="c-part"><span>PARTNAME</span></th><th><span>PAR</span></th></tr>
                    </thead>
                    <tbody>
                        <tr><td><div class="node root"><svg class="i14"><use href="#cube"/></svg>RDG.PRT</div></td><td colspan="3"></td></tr>
                        <tr><td><div class="node"><i class="twisty"></i><svg class="i16"><use href="#design"/></svg>设计项</div></td><td colspan="3"></td></tr>
                        <tr><td><div class="node leaf"><svg class="i16"><use href="#splane"/></svg>RIGHT</div></td><td colspan="3"></td></tr>
                        <tr><td><div class="node leaf"><svg class="i16"><use href="#splane"/></svg>TOP</div></td><td colspan="3"></td></tr>
                        <tr><td><div class="node leaf"><svg class="i16"><use href="#splane"/></svg>FRONT</div></td><td colspan="3"></td></tr>
                        <tr><td><div class="node leaf"><svg class="i16"><use href="#csys"/></svg>PRT_CSYS_DEF</div></td><td colspan="3"></td></tr>
                        <tr class="insert"><td></td><td colspan="3"></td></tr>
                        <tr class="rest"><td></td><td colspan="3"></td></tr>
                    </tbody>
                </table>
            </div>
            <div class="scrolls">
                <div class="scroll off"><button title="left"><i class="left"></i></button><div class="track"></div><button title="right"><i class="right"></i></button></div>
                <div class="scroll"><button title="left"><i class="left"></i></button><div class="track"><div class="thumb"></div></div><button title="right"><i class="right"></i></button></div>
            </div>
        </aside>

        <section class="canvas">
            <svg class="model" viewBox="0 0 1546 817">
                <g class="datum">
                    <path d="M758 81L900 371L788 735L646 446Z"/>
                    <path d="M615.500 226.500H1044L931 590.500H502Z"/>
                    <path d="M488 263.500H916L1059 553.500H630Z"/>
                </g>
                <path d="M773 408.500H795" stroke="#c8374e"/>
                <path d="M773 408L765 393" stroke="#4fd06a"/>
                <path d="M773 408L767 427" stroke="#55d5ee"/>
                <circle cx="795" cy="408.500" r="2.500" fill="#c8374e"/>
                <circle cx="765.500" cy="393.500" r="3" fill="#2be44c"/>
                <circle cx="767" cy="427" r="2.500" fill="#4fe0f5"/>
                <text x="487" y="263">FRONT</text>
                <text x="1044" y="226">TOP</text>
                <text x="787" y="736">RIGHT</text>
            </svg>
            <div class="viewbar">
                <button title="refit"><svg class="i16"><use href="#v-fit"/></svg></button>
                <button title="zoom in"><svg class="i16"><use href="#v-in"/></svg></button>
                <button title="zoom out"><svg class="i16"><use href="#v-out"/></svg></button>
                <button title="repaint"><svg class="i16"><use href="#v-repaint"/></svg></button>
                <button class="more" title="render"><svg class="i16"><use href="#v-render"/></svg></button>
                <button class="more" title="display style"><svg class="i16"><use href="#v-style"/></svg></button>
                <button class="more" title="orientation"><svg class="i16"><use href="#v-orient"/></svg></button>
                <button title="view manager"><svg class="i16"><use href="#v-camera"/></svg></button>
                <button title="previous"><svg class="i16"><use href="#v-box"/></svg></button>
                <button title="next"><svg class="i16"><use href="#v-box2"/></svg></button>
                <button title="perspective"><svg class="i16"><use href="#v-persp"/></svg></button>
                <button class="on" title="section"><svg class="i16"><use href="#v-sec"/></svg></button>
                <button class="more" title="clip"><svg class="i16"><use href="#v-clip"/></svg></button>
                <button class="more" title="datum filters"><svg class="i16"><use href="#v-datum"/></svg></button>
                <button class="on" title="planes"><svg class="i16"><use href="#v-plane"/></svg></button>
                <button title="axes"><svg class="i16"><use href="#v-axis"/></svg></button>
                <button title="points"><svg class="i16"><use href="#v-point"/></svg></button>
                <button title="csys"><svg class="i16"><use href="#v-csys"/></svg></button>
                <button title="annotations"><svg class="i16"><use href="#v-note"/></svg></button>
                <button class="on" title="spin center"><svg class="i16"><use href="#v-spin"/></svg></button>
                <button title="simulate" disabled><svg class="i16"><use href="#v-tri"/></svg></button>
                <button title="pause" disabled><svg class="i16"><use href="#v-pause"/></svg></button>
                <button title="results" disabled><svg class="i16"><use href="#v-last"/></svg></button>
            </div>
        </section>
    </main>

    <footer class="status">
        <div class="status-btns">
            <button class="on" title="navigator"><svg class="i18"><use href="#layout"/></svg></button>
            <button title="browser"><svg class="i18"><use href="#globe"/></svg></button>
            <button title="full screen"><i class="square"></i></button>
        </div>
        <ul class="messages">
            <li>已读入受限制参数的外部文件。E:\PROECOURSE\CreoCustom\ISO_TWX.lst。</li>
            <li>用默认模板E:\PROECOURSE\templates\mmns_part_solid.prt作为模板。</li>
        </ul>
        <div class="find">
            <button title="find"><svg class="i16"><use href="#binoc"/></svg></button>
            <button title="find options"><i class="caret"></i></button>
        </div>
        <div class="picker">
            <select aria-label="选择过滤器"><option>几何</option></select>
            <i class="caret"></i>
        </div>
        <svg class="grip" viewBox="0 0 12 12"><path d="M1 12L12 1M5 12l7-7M9 12l3-3" stroke="#aaa"/></svg>
    </footer>
</div>

<div class="taskbar">
    <div class="apps">
        <button title="start"><svg class="i16" viewBox="0 0 16 16"><path d="M0 0h7.500v7.500H0zM8.500 0H16v7.500H8.500zM0 8.500h7.500V16H0zM8.500 8.500H16V16H8.500z" fill="#3fb1f2"/></svg></button>
        <button title="search"><svg class="i16" viewBox="0 0 16 16"><circle cx="9" cy="6.500" r="5" fill="none" stroke="#fff" stroke-width="1.500"/><path d="M5 11l-3 4" stroke="#fff" stroke-width="2"/></svg></button>
        <button title="task view"><svg class="i16" viewBox="0 0 16 16"><path d="M0 6h10v9H0z" fill="#777"/><path d="M5 1h11v10H5z" fill="#eee"/></svg></button>
        <button title="widgets"><svg class="i16" viewBox="0 0 16 16"><path d="M1 1h14v14H1z" fill="#fff"/><path d="M8 1h7v6H8z" fill="#31b3dc"/><path d="M8 8h7v7H8z" fill="#6dd5ec"/><path d="M8 1v14" stroke="#123" /></svg></button>
        <button title="chat"><svg class="i16" viewBox="0 0 16 16"><path d="M8 0a8 8 0 1 1-4 15l-4 1 1-4A8 8 0 0 1 8 0z" fill="#7a6ad0"/><path d="M4 5h6v6H4zM10 7l3-2v6l-3-2z" fill="#fff"/></svg></button>
        <button title="settings"><svg class="i16" viewBox="0 0 16 16"><circle cx="8" cy="8" r="6" fill="#8a9096"/><circle cx="8" cy="8" r="7" fill="none" stroke="#8a9096" stroke-width="2" stroke-dasharray="3 2.500"/><circle cx="8" cy="8" r="3.500" fill="#16375a" stroke="#9fe0ff"/></svg></button>
        <button class="run" title="edge"><svg class="i16" viewBox="0 0 16 16"><circle cx="8" cy="8" r="8" fill="url(#gEdge)"/><path d="M0 8c1-4 6-5 8-2-3 2-2 7 6 7-4 5-13 3-14-5z" fill="#1256a6"/><path d="M8 6c3 0 2 2 1 3 1 2 5 2 7 0l-1 4c-6 2-10-2-7-7z" fill="#14234f"/></svg></button>
        <button class="run" title="explorer"><svg class="i16" viewBox="0 0 16 16"><path d="M0 1h6l2 2h8v11H0z" fill="#f9c440"/><path d="M2 10h12v5h-3v-2H5v2H2z" fill="#2c8bd0"/></svg></button>
        <button title="mail"><svg class="i16" viewBox="0 0 16 16"><path d="M0 6l8-5 8 5v8H0z" fill="#1d86d8"/><path d="M2 5h12L8 10z" fill="#fff"/><path d="M0 6l8 5 8-5v8H0z" fill="#3cb2f0"/></svg></button>
        <button title="calculator"><svg class="i16" viewBox="0 0 16 16"><path d="M2 0h12v16H2z" fill="#7d858c"/><path d="M3 1h10v4H3z" fill="#5ccbe0"/><path d="M4 7h2v2H4zM7 7h2v2H7zM10 7h2v2h-2zM4 11h2v2H4zM7 11h2v2H7zM10 11h2v2h-2z" fill="#fff"/></svg></button>
        <button title="monitor"><svg class="i16" viewBox="0 0 16 16"><path d="M0 2h16v12H0z" fill="#dce8f2"/><path d="M2 12V6l4 5 3-7 3 7 2-3" fill="none" stroke="#3981b8"/></svg></button>
        <button title="store"><svg class="i16" viewBox="0 0 16 16"><path d="M5 3V1h6v2" fill="none" stroke="#3ca6e8"/><rect y="3" x="1" width="14" height="12" rx="2" fill="#fff"/><path d="M5 6h3v3H5z" fill="#e74c2c"/><path d="M9 6h3v3H9z" fill="#6fb52c"/><path d="M5 10h3v3H5z" fill="#2d8be0"/><path d="M9 10h3v3H9z" fill="#f5b81f"/></svg></button>
        <button title="todo"><svg class="i16" viewBox="0 0 16 16"><path d="M1 9l3-3 3 3 6-7 3 2-9 11z" fill="#2f7fe0"/></svg></button>
        <button class="run" title="app"><svg class="i16" viewBox="0 0 16 16"><path d="M0 0h16v16H0z" fill="#e8531f"/><path d="M2 3h5M4 1v6M9 3h5M9 6h5M11 1v6M2 10h5M2 13h5M9 10h5v4H9z" stroke="#fff" fill="none"/></svg></button>
        <button class="run" title="u"><svg class="i16" viewBox="0 0 16 16"><rect width="16" height="16" rx="3" fill="#1b8ceb"/><path d="M5 3v6c0 5 6 5 6 0V3M5 4h3" fill="none" stroke="#fff" stroke-width="2"/></svg></button>
        <button class="run" title="security"><svg class="i16" viewBox="0 0 16 16"><path d="M8 0l7 3c0 7-2 10-7 13C3 13 1 10 1 3z" fill="#2ba3e8"/><path d="M8 0v16C3 13 1 10 1 3z" fill="#1673bd"/></svg></button>
        <button class="run" title="word"><svg class="i16" viewBox="0 0 16 16"><path d="M5 1h11v14H5z" fill="#4aa1e8"/><path d="M5 5h11v10H5z" fill="#2460b4"/><path d="M0 4h9v9H0z" fill="#174a9c"/><path d="M2 6l1 5 1.500-4L6 11l1-5" fill="none" stroke="#fff"/></svg></button>
        <button class="run current" title="creo"><svg class="i16" viewBox="0 0 16 16"><path d="M0 0h16v16H0z" fill="#f2f2f2"/><path d="M4 3h9v9H4z" fill="#1f8dc2"/><path d="M4 5h7v7H4z" fill="#7acbec"/></svg></button>
    </div>
    <div class="tray">
        <svg class="i12" viewBox="0 0 12 12"><path d="M1 9l5-5 5 5" fill="none" stroke="#fff" stroke-width="1.500"/></svg>
        <svg class="i16" viewBox="0 0 16 16"><circle cx="8" cy="8" r="8" fill="#3fd33a"/><path d="M3 6l4 0 3-3 1 3 2-1-1 4-3 1-1 4-2-1 1-3-2-1z" fill="#115a15"/></svg>
        <span class="ime">英</span>
        <span class="ime">五</span>
        <svg class="i12" viewBox="0 0 12 12"><path d="M0 5c3-4 9-4 12 0M2 7c2-3 6-3 8 0" fill="none" stroke="#fff" stroke-width="1.300"/><circle cx="6" cy="9.500" r="1.800" fill="#fff"/></svg>
        <svg class="i16" viewBox="0 0 16 16"><path d="M1 6h2l4-4v12l-4-4H1zM9 5c2 2 2 4 0 6M11 3c3 3 3 7 0 10M13 1c4 4 4 10 0 14" fill="none" stroke="#fff"/></svg>
        <svg class="i16" viewBox="0 0 16 16"><path d="M5 5h9v7H3V9" fill="none" stroke="#fff" stroke-width="1.500"/><path d="M7 7h5v4H7zM1 4h5v4H1zM2 2v2M5 2v2M15 7v3" fill="#fff" stroke="#fff"/></svg>
        <div class="clock"><time>16:47</time><time>2021/7/27</time></div>
    </div>
</div>

<!-- small floating widget docked at the top edge -->
<div class="float"><i></i></div>

<!-- forum stamp over the lower right corner -->
<div class="stamp">
    <svg viewBox="0 0 60 58"><path d="M16 30C2 14 2 2 14 3c14 1 28 16 29 28 0 6-4 8-6 4" fill="none" stroke="#7f97a6" stroke-width="3"/><path d="M38 19c10-6 18 0 15 12-3 14-12 24-22 23l-6-2" fill="none" stroke="#c8434c" stroke-width="4"/><path d="M28 32c-10-4-20 2-17 9 3 6 12 6 16 0M21 38c-4 8 6 10 11 6" fill="none" stroke="#5f7180" stroke-width="3"/></svg>
    <div><strong>野火论坛</strong><span>www.proewildfire.cn</span></div>
</div>

</body>
</html>
```
FILE: styles.css
```css
* {
    box-sizing: border-box;
}
body {
    margin: 0;
    height: 100vh;
    display: flex;
    flex-direction: column;
    overflow: hidden;
    background: #8f979c;
    color: #3e4246;
    font-family: 'Noto Sans', 'Noto Sans CJK SC', sans-serif;
    font-size: 13px;
    line-height: 18px;
}
button {
    display: inline-flex;
    align-items: center;
    justify-content: center;
    padding: 0;
    border: 0;
    background: none;
    color: inherit;
    font: inherit;
    white-space: nowrap;
}
h1, h2, ul {
    margin: 0;
    padding: 0;
    font-weight: normal;
}
svg {
    flex: none;
    display: block;
}
.sprite {
    position: absolute;
    width: 0;
    height: 0;
}
.i8 { width: 8px; height: 8px; }
.i12 { width: 12px; height: 12px; }
.i14 { width: 14px; height: 14px; }
.i16 { width: 16px; height: 16px; }
.i18 { width: 18px; height: 16px; }
.i20 { width: 20px; height: 20px; }
.i32 { width: 32px; height: 32px; }
.lettered {
    font-family: 'Liberation Sans', sans-serif;
    font-weight: bold;
}

.caret {
    flex: none;
    width: 8px;
    height: 4px;
    background: #55595c;
    clip-path: polygon(0 0, 100% 0, 50% 100%);
}
button:disabled .caret {
    background: #a9adb0;
}

.window {
    flex: 1;
    min-height: 0;
    display: flex;
    flex-direction: column;
    border: 4px solid #9aa2a8;
    border-bottom-width: 3px;
    border-radius: 6px 6px 8px 8px;
    background: #f7f9fb;
}

/* title bar */
.titlebar {
    height: 28px;
    display: grid;
    grid-template-columns: 1fr auto 1fr;
    grid-template-areas: "quick title win";
    align-items: center;
    background: #dadfdf;
}
.brand, .quick {
    grid-row: 1;
    grid-column: 1;
}
.brand {
    display: flex;
    align-items: center;
    gap: 4px;
    padding-left: 8px;
    color: #565c60;
    font-size: 17px;
}
.quick {
    display: flex;
    align-items: center;
    padding-left: 83px;
}
.quick button {
    width: 24px;
    height: 24px;
}
.quick .with-caret {
    width: 38px;
    gap: 7px;
}
.quick .customize {
    border-left: 1px solid #a4a9aa;
}
.quick .customize .caret {
    border-top: 1px solid #333;
}
.titlebar h1 {
    grid-area: title;
    font-size: 14px;
}
.winbtns {
    grid-area: win;
    justify-self: end;
    display: flex;
    gap: 15px;
    padding-right: 10px;
}

/* tabs */
.tabs {
    height: 30px;
    display: flex;
    background: #3d4648;
    color: #fff;
    font-size: 14px;
}
.tab {
    padding: 3px 24px 0 23px;
}
.tab.file {
    padding: 3px 20px 0;
    background: linear-gradient(#63c544, #47a32c);
}
.tab.active {
    background: #f7f9fb;
    color: #438f2c;
    padding-top: 2px;
    margin-top: 1px;
}
.tabtools {
    margin-left: auto;
    display: flex;
    align-items: center;
    gap: 12px;
    padding-right: 7px;
}
.tabtools button {
    gap: 7px;
}
.tabtools .caret {
    background: #fff;
}
.tabtools .help {
    font-weight: bold;
}

/* ribbon */
.ribbon {
    height: 118px;
    display: flex;
    border-bottom: 1px solid #a9bac4;
    overflow: hidden;
}
.group {
    display: flex;
    flex-direction: column;
    border-right: 1px solid #b9bec2;
}
.tools {
    display: flex;
    justify-content: center;
    gap: 8px;
    height: 87px;
    padding: 0 7px;
}
.col {
    display: flex;
    flex-direction: column;
    align-items: flex-start;
}
.cmd {
    height: 29px;
    gap: 4px;
}
.cmd .caret {
    margin-left: 2px;
}
.cmd:disabled {
    color: #aeb2b5;
}
.big {
    flex-direction: column;
    justify-content: flex-start;
    padding-top: 6px;
}
.big span {
    display: flex;
    align-items: center;
    gap: 4px;
    margin-top: 8px;
}
.big > .caret {
    margin-top: 8px;
}
.label {
    flex: 1;
    gap: 4px;
    display: flex;
    align-items: center;
    justify-content: center;
    padding: 2px 4px 0;
}

/* work area */
.work {
    flex: 1;
    min-height: 0;
    display: flex;
}
.side {
    width: 366px;
    display: flex;
    flex-direction: column;
    border-right: 3px solid #d6dcdd;
}
.side-tabs {
    height: 29px;
    display: flex;
    background: #dadfdf;
}
.side-tabs button {
    gap: 4px;
    padding: 0 9px 0 7px;
}
.side-tabs .active {
    background: #f7f9fb;
}
.side-head {
    height: 29px;
    display: flex;
    align-items: center;
    gap: 11px;
    padding: 0 9px 0 28px;
}
.side-head h2 {
    flex: 1;
    font-size: 12px;
    font-weight: bold;
}
.side-head button {
    gap: 6px;
}
.filter {
    display: flex;
    align-items: center;
    padding: 0 11px 0 12px;
}
.search {
    flex: 1;
    display: flex;
    align-items: center;
    height: 31px;
    margin: 0 6px 0 4px;
    padding-right: 5px;
    border: 1px solid #a3acae;
    background: #fff;
}
.search input {
    flex: 1;
    min-width: 0;
    height: 100%;
    border: 0;
    outline: 0;
    background: none;
    font: inherit;
}
.filter > button:last-child {
    margin-left: 11px;
}
.tree {
    flex: 1;
    min-height: 0;
    padding: 5px 5px 0 8px;
}
.tree table {
    width: 100%;
    height: 100%;
    table-layout: fixed;
    border-collapse: collapse;
}
.tree tr {
    height: 22px;
}
.tree thead tr {
    height: 25px;
}
.tree .insert {
    height: 8px;
    border-bottom: 2px solid #74b85d;
}
.tree .rest {
    height: auto;
}
.tree th {
    padding: 3px 3px 0 5px;
    border-bottom: 1px solid #c6ced2;
    border-right: 1px solid #c6ced2;
    background: #fafafa;
    font-size: 14px;
    font-weight: normal;
    text-align: left;
}
.tree th:last-child {
    border-right: 0;
    padding-right: 0;
}
.tree th span {
    display: block;
    overflow: hidden;
    mask-image: linear-gradient(to right, #000 calc(100% - 10px), transparent);
}
.tree th:last-child span {
    mask-image: none;
}
.tree .c-name { width: 155px; }
.tree .c-no { width: 91px; }
.tree .c-part { width: 78px; }
.tree td {
    padding: 0;
    border-right: 1px solid #e3e8ea;
    font-size: 12px;
}
.tree td:last-child {
    border-right: 0;
}
.node {
    display: flex;
    align-items: center;
    gap: 5px;
    padding-left: 8px;
    white-space: nowrap;
}
.node.root {
    padding-left: 4px;
    gap: 6px;
}
.node.leaf {
    padding-left: 23px;
}
.twisty {
    width: 8px;
    height: 10px;
    margin-right: 2px;
    background: #8d9194;
    clip-path: polygon(0 0, 100% 50%, 0 100%);
}
.scrolls {
    display: flex;
    gap: 1px;
    padding: 0 5px 6px 8px;
}
.scroll {
    flex: 1;
    display: flex;
    height: 15px;
    border: 1px solid #d0d4d6;
}
.scroll.off {
    flex: none;
    width: 156px;
}
.scroll button {
    width: 14px;
}
.scroll .track {
    flex: 1;
    background: #e0e1e2;
}
.scroll.off .track {
    background: none;
    border: 1px solid #e0e3e5;
    border-width: 0 1px;
}
.thumb {
    width: 28px;
    height: 100%;
    background: #fafafa;
    border: 1px solid #b9bdc0;
}
.left, .right {
    width: 5px;
    height: 8px;
    background: #8f9396;
}
.left { clip-path: polygon(100% 0, 0 50%, 100% 100%); }
.right { clip-path: polygon(0 0, 100% 50%, 0 100%); }

/* graphics area */
.canvas {
    flex: 1;
    min-width: 0;
    position: relative;
    display: flex;
    justify-content: center;
    align-items: flex-start;
    padding-top: 7px;
    background: linear-gradient(#004db3, #000 98%);
}
.model {
    position: absolute;
    inset: 0;
    width: 100%;
    height: 100%;
}
.datum path {
    fill: none;
    stroke: #7a6030;
}
.model text {
    fill: #fff;
    font-family: 'Liberation Mono', monospace;
    font-size: 14px;
}
.viewbar {
    position: relative;
    display: flex;
    gap: 4px;
    padding: 4px;
    background: #fafbfc;
    border: 1px solid #d6dbe0;
}
.viewbar button {
    width: 22px;
    height: 22px;
    border: 1px solid transparent;
}
.viewbar .on {
    background: #dcdfe0;
    border-color: #a7abad;
}
.viewbar .more {
    background: linear-gradient(135deg, transparent 50%, #444 50%) right bottom / 4px 4px no-repeat;
}

/* status bar */
.status {
    height: 47px;
    display: flex;
    align-items: center;
    padding: 8px 3px 0 6px;
    border-top: 1px solid #a9aeb0;
}
.status-btns {
    display: flex;
    align-items: center;
    gap: 4px;
    padding-right: 10px;
    margin-top: 6px;
    border-right: 1px solid #a9aeb0;
}
.status-btns button {
    width: 22px;
    height: 23px;
}
.status-btns .on {
    background: #e0e2e3;
    border: 1px solid #a7abad;
}
.square {
    width: 16px;
    height: 16px;
    border: 1px solid #2d6d8c;
    background: linear-gradient(#fff, #cfe9f3);
}
.messages {
    flex: 1;
    padding-left: 15px;
    margin-bottom: 6px;
    list-style: none;
    font-size: 11px;
    line-height: 16px;
}
.messages li::before {
    content: "";
    float: left;
    width: 5px;
    height: 5px;
    margin: 5px 0 0 -10px;
    border-radius: 50%;
    background: #27506b;
}
.find {
    display: flex;
    padding: 1px 2px;
    margin-right: 111px;
    border-left: 1px solid #b4b8ba;
    border-right: 1px solid #b4b8ba;
}
.find button {
    width: 28px;
    height: 24px;
    border: 1px solid #c2c6c8;
}
.find button + button {
    width: 15px;
    border-left: 0;
}
.picker {
    position: relative;
    width: 201px;
    margin-right: 4px;
}
.picker select {
    width: 100%;
    height: 27px;
    padding: 0 7px;
    border: 1px solid #b4b8ba;
    appearance: none;
    background: linear-gradient(#b4b8ba, #b4b8ba) right 14px top / 1px 100% no-repeat #fdfdfd;
    color: inherit;
    font: inherit;
}
.picker .caret {
    position: absolute;
    right: 4px;
    top: 12px;
}
.grip {
    width: 12px;
    height: 12px;
    align-self: flex-end;
    margin-bottom: 4px;
}

/* taskbar */
.taskbar {
    height: 33px;
    display: grid;
    grid-template-columns: 1fr auto 1fr;
    background: linear-gradient(90deg, #1d2a35 0, #1f2b36 18%, #14244f 22%, #11204d 72%, #1b2a38 79%, #1d2b37 100%);
    color: #fff;
    overflow: hidden;
}
.apps {
    grid-column: 2;
    display: flex;
}
.apps button {
    position: relative;
    width: 44px;
    height: 34px;
}
.apps .run::after {
    content: "";
    position: absolute;
    bottom: 5px;
    left: 20px;
    width: 4px;
    height: 4px;
    border-radius: 2px;
    background: #aab3bf;
}
.apps .current {
    background: linear-gradient(#2b3a5c, #2b3a5c) center / 38px 24px no-repeat;
}
.apps .current::after {
    left: 16px;
    width: 12px;
    bottom: 4px;
    background: #4cb4f0;
}
.tray {
    justify-self: end;
    display: flex;
    align-items: flex-start;
    gap: 10px;
    padding: 9px 20px 0 0;
}
.ime {
    font-size: 15px;
    line-height: 32px;
}
.ime + .ime {
    margin: 0 12px;
}
.ime ~ svg {
    margin-top: 9px;
}
.clock {
    display: flex;
    flex-direction: column;
    align-items: flex-end;
    margin-left: 4px;
    font-size: 11px;
    line-height: 16px;
}

/* overlays */
.float {
    position: absolute;
    top: 0;
    right: 488px;
    width: 71px;
    height: 4px;
    background: #f4f8fb;
    overflow: hidden;
}
.float i {
    position: absolute;
    right: 0;
    top: -8px;
    width: 12px;
    height: 12px;
    border-radius: 50%;
    background: #35c926;
}
.stamp {
    position: absolute;
    right: 5px;
    bottom: 5px;
    display: flex;
    width: 206px;
    height: 58px;
    background: linear-gradient(transparent 27px, rgba(190, 194, 198, 0.5) 27px);
    opacity: 0.8;
    pointer-events: none;
}
.stamp svg {
    width: 60px;
    height: 58px;
}
.stamp div {
    display: flex;
    flex-direction: column;
    align-items: flex-end;
    margin-left: -4px;
}
.stamp strong {
    padding-right: 10px;
    color: #6cc492;
    font-family: 'Noto Sans CJK SC', sans-serif;
    font-size: 29px;
    line-height: 32px;
}
.stamp span {
    color: #4d6572;
    font-family: 'Liberation Sans', sans-serif;
    font-size: 16px;
    line-height: 26px;
}
```
